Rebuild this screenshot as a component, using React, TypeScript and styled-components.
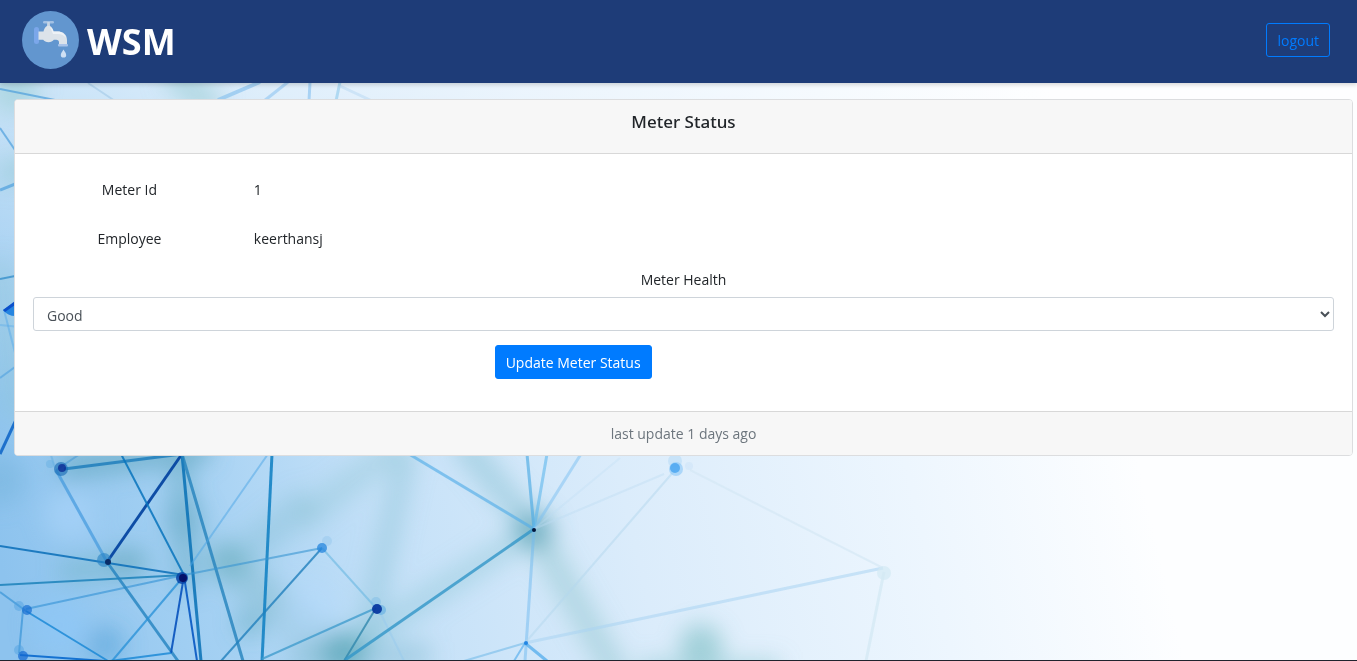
import React from "react";
import styled, { createGlobalStyle } from "styled-components";

const GlobalStyle = createGlobalStyle`
  *, *::before, *::after { box-sizing: border-box; }
  body {
    margin: 0;
    background: #fff;
    color: #212529;
    font-family: "Segoe UI", "Open Sans", "Noto Sans", sans-serif;
    font-size: 14px;
    line-height: 20px;
  }
`;

const Page = styled.div`
  display: flex;
  flex-direction: column;
  min-height: 100vh;
  border-bottom: 1px solid #20232e;
`;

const Backdrop = styled.svg`
  position: fixed;
  inset: 0;
  z-index: -1;
  width: 100%;
  height: 100%;
`;

const Navbar = styled.header`
  display: flex;
  align-items: center;
  justify-content: space-between;
  height: 83px;
  padding: 0 27px 3px 22px;
  background: #1e3c78;
  box-shadow: 0 2px 4px rgba(0, 0, 0, 0.15);
`;

const Brand = styled.a`
  display: flex;
  align-items: center;
  gap: 8px;
  color: #fff;
  font-size: 36px;
  font-weight: 700;
  line-height: 54px;
  text-decoration: none;
`;

const BrandName = styled.span`
  padding-top: 4px;
`;

const Logo = styled.svg`
  width: 57px;
  height: 58px;
`;

const Button = styled.button<{ $outline?: boolean }>`
  height: 34px;
  padding: 2px 10px 0;
  border: 1px solid #007bff;
  border-radius: 3px;
  background: ${(p) => (p.$outline ? "transparent" : "#007bff")};
  color: ${(p) => (p.$outline ? "#007bff" : "#fff")};
  font: inherit;
  cursor: pointer;
`;

const Main = styled.main`
  padding: 16px 4px 16px 14px;
`;

const Card = styled.section`
  border: 1px solid #dcdddf;
  border-radius: 4px;
  background: #fff;
  overflow: hidden;
`;

const CardHeader = styled.header`
  padding: 10px 18px 19px;
  border-bottom: 1px solid #d8d8d8;
  background: #f7f7f7;
  text-align: center;
`;

const Title = styled.h1`
  margin: 0;
  font-family: "Segoe UI", "Noto Sans", sans-serif;
  font-size: 17px;
  font-weight: 500;
  line-height: 24px;
`;

const CardBody = styled.form`
  padding: 18px 18px 32px;
`;

const Field = styled.div`
  display: grid;
  grid-template-columns: 1fr 5fr;
  align-items: center;
  height: 35px;
  margin-bottom: 14px;
`;

const FieldLabel = styled.label`
  padding-right: 24px;
  text-align: center;
`;

const FieldValue = styled.output`
  padding-left: 4px;
`;

const SelectGroup = styled.div`
  display: flex;
  flex-direction: column;
  margin-bottom: 14px;
`;

const SelectLabel = styled.label`
  margin-bottom: 7px;
  text-align: center;
`;

const Select = styled.select`
  width: 100%;
  height: 34px;
  padding: 2px 9px 0;
  border: 1px solid #ced4da;
  border-radius: 3px;
  background: #fff;
  color: #495057;
  font: inherit;
`;

const Actions = styled.div`
  display: grid;
  grid-template-columns: 1fr 1fr 1fr;
`;

const ActionSlot = styled.div`
  grid-column: 2;
  padding-left: 28px;
`;

const CardFooter = styled.footer`
  padding: 12px 18px 11px;
  border-top: 1px solid #d8d8d8;
  background: #f7f7f7;
  color: #6c757d;
  text-align: center;
`;

type Line = [number, number, number, number, string, number, number];

/* x1, y1, x2, y2, colour, width, opacity */
const lines: Line[] = [
  [0, 89, 60, 101, "#4d9fdc", 2, 0.7],
  [88, 83, 115, 101, "#a9cdea", 2, 0.7],
  [218, 100, 260, 82, "#8cc3ee", 4, 0.7],
  [264, 101, 288, 82, "#9bcbf2", 3, 0.7],
  [310, 82, 309, 101, "#9bcbf2", 3, 0.8],
  [340, 82, 336, 101, "#9bcfee", 3, 0.7],
  [340, 86, 370, 100, "#c3def5", 3, 0.7],
  [0, 128, 34, 178, "#4fa0dd", 2, 0.7],
  [0, 190, 30, 178, "#4fa0dd", 3, 0.7],
  [0, 279, 30, 273, "#3890cb", 2, 0.8],
  [4, 310, 30, 411, "#5aaae8", 2, 0.5],
  [0, 325, 30, 328, "#5aaae8", 2, 0.4],
  [0, 378, 30, 356, "#4fa0e0", 2, 0.6],
  [0, 454, 30, 390, "#1268c8", 3, 0.9],
  [50, 452, 55, 468, "#5aa9dc", 2, 0.4],
  [56, 470, 80, 454, "#4d9bd5", 2, 0.6],
  [64, 469, 182, 454, "#197bbb", 3, 0.8],
  [56, 470, 107, 562, "#3d96dc", 3, 0.65],
  [107, 562, 182, 454, "#0746a2", 3, 0.95],
  [121, 454, 184, 575, "#0874bd", 2, 0.85],
  [182, 454, 201, 661, "#0870b5", 3, 0.85],
  [182, 454, 243, 661, "#2583bd", 3, 0.8],
  [272, 454, 262, 661, "#1683c5", 3, 0.9],
  [268, 454, 190, 566, "#4da5e6", 2, 0.5],
  [0, 546, 184, 575, "#1173bb", 2, 0.9],
  [0, 585, 184, 575, "#2386bd", 2, 0.9],
  [26, 609, 184, 575, "#3995d7", 2, 0.65],
  [184, 575, 322, 548, "#3795d2", 2, 0.6],
  [107, 562, 178, 661, "#2383c0", 3, 0.8],
  [184, 576, 112, 661, "#258fd7", 2, 0.75],
  [184, 576, 171, 653, "#0752bd", 2, 0.9],
  [184, 576, 197, 661, "#0758c3", 2, 0.9],
  [0, 592, 26, 611, "#3995d7", 2, 0.7],
  [23, 610, 19, 653, "#3995d7", 2, 0.7],
  [26, 611, 108, 661, "#1686d5", 2, 0.8],
  [20, 655, 105, 661, "#0869ce", 2, 0.9],
  [110, 661, 171, 653, "#1686d5", 2, 0.8],
  [322, 548, 221, 661, "#2280bd", 2, 0.8],
  [322, 548, 376, 608, "#75bce4", 2, 0.7],
  [376, 608, 262, 659, "#429dce", 2, 0.8],
  [376, 608, 344, 661, "#3188ad", 2, 0.8],
  [378, 608, 404, 661, "#9bcced", 2, 0.6],
  [345, 660, 534, 529, "#3396c8", 3, 0.8],
  [409, 454, 534, 529, "#55aee8", 3, 0.65],
  [527, 454, 534, 529, "#4eabe4", 3, 0.65],
  [547, 454, 534, 529, "#5fb7ed", 3, 0.6],
  [581, 454, 534, 529, "#7cc0f2", 3, 0.5],
  [620, 458, 534, 529, "#bddcf3", 2, 0.3],
  [664, 474, 534, 529, "#bddcf3", 2, 0.4],
  [534, 529, 525, 661, "#71baf0", 3, 0.5],
  [525, 643, 675, 470, "#b4d7ee", 2, 0.5],
  [525, 643, 883, 568, "#a9d4f2", 3, 0.55],
  [464, 661, 525, 643, "#83c2ec", 2, 0.7],
  [525, 643, 547, 661, "#4ba9ec", 3, 0.7],
  [525, 643, 514, 661, "#4ba9ec", 2, 0.6],
  [690, 470, 883, 568, "#d3e7f4", 2, 0.6],
  [884, 572, 866, 661, "#cfe7f2", 3, 0.6],
];

/* blurred links that sit behind the sharp ones */
const hazes: Line[] = [
  [0, 175, 70, 160, "#8ec5cd", 24, 0.5],
  [0, 260, 15, 420, "#8ec5d5", 26, 0.4],
  [170, 70, 215, 110, "#9cced6", 30, 0.6],
  [300, 520, 400, 445, "#8ec5d5", 26, 0.4],
  [60, 468, 210, 448, "#5fa6bc", 26, 0.6],
  [407, 450, 365, 640, "#87c2d2", 22, 0.45],
  [460, 440, 534, 530, "#87c2d2", 26, 0.5],
  [534, 530, 620, 680, "#87c2c8", 26, 0.45],
  [534, 530, 345, 650, "#87c2d2", 24, 0.4],
  [230, 565, 310, 500, "#78b5c8", 32, 0.3],
  [60, 572, 150, 562, "#6caebc", 26, 0.4],
  [210, 550, 345, 660, "#78b5c4", 36, 0.4],
  [180, 460, 188, 590, "#5fa6bc", 24, 0.45],
  [290, 660, 430, 655, "#78b5c8", 26, 0.4],
  [640, 672, 780, 672, "#8ec8cf", 26, 0.5],
];

/* x, y, radius, colour, opacity */
const nodes: [number, number, number, string, number][] = [
  [50, 464, 4, "#69b1e4", 0.5],
  [61, 469, 7, "#1468b4", 0.6],
  [62, 468, 4, "#07218f", 0.7],
  [104, 560, 7, "#2682c4", 0.6],
  [108, 562, 3, "#07255e", 0.9],
  [182, 578, 6, "#0642a5", 0.85],
  [183, 578, 4, "#030b63", 0.9],
  [19, 606, 5, "#4d9fe0", 0.45],
  [27, 610, 5, "#176ed2", 0.7],
  [19, 650, 5, "#4d9fe0", 0.45],
  [23, 656, 5, "#1268d1", 0.7],
  [327, 541, 5, "#8fc2ec", 0.4],
  [322, 548, 5, "#2586dd", 0.75],
  [376, 602, 5, "#80bde7", 0.5],
  [381, 610, 5, "#61aee3", 0.6],
  [377, 609, 5, "#0839a0", 0.95],
  [534, 530, 2, "#02173d", 1],
  [526, 643, 2, "#1b80e2", 0.9],
  [675, 461, 7, "#b9dcf7", 0.6],
  [676, 469, 7, "#8fc9f8", 0.65],
  [675, 468, 5, "#47a4f0", 0.8],
  [689, 466, 4, "#cfe5f8", 0.6],
  [884, 573, 7, "#d3e9f3", 0.7],
];

const puffs: [number, number, number, string, number][] = [
  [15, 90, 24, "#9cced6", 0.6],
  [534, 530, 20, "#3b91a3", 0.45],
  [701, 646, 22, "#69b5ba", 0.5],
  [345, 653, 22, "#439cab", 0.5],
  [228, 562, 18, "#4f9fae", 0.3],
  [250, 623, 15, "#4f9fae", 0.4],
  [125, 562, 16, "#5099ad", 0.3],
  [185, 520, 22, "#5ba3be", 0.3],
  [105, 645, 20, "#3c96cf", 0.4],
  [0, 480, 26, "#6fb0d8", 0.4],
  [70, 515, 26, "#a6d2f8", 0.7],
  [60, 625, 28, "#8ec8f8", 0.6],
  [310, 610, 28, "#b6dafb", 0.6],
];

const NetworkBackdrop = () => (
  <Backdrop viewBox="0 0 1357 661" preserveAspectRatio="xMinYMin slice" aria-hidden="true">
    <defs>
      <linearGradient id="sky" gradientUnits="userSpaceOnUse" x1="0" y1="560" x2="1100" y2="300">
        <stop offset="0" stopColor="#8dc3ee" />
        <stop offset="0.18" stopColor="#a5d1f3" />
        <stop offset="0.34" stopColor="#c5e1f8" />
        <stop offset="0.55" stopColor="#dbecfb" />
        <stop offset="0.8" stopColor="#edf6fe" />
        <stop offset="1" stopColor="#fdfeff" />
      </linearGradient>
      <linearGradient id="lift" x1="0" y1="0" x2="0" y2="1">
        <stop offset="0.1" stopColor="#fff" stopOpacity="0.5" />
        <stop offset="0.6" stopColor="#fff" stopOpacity="0" />
      </linearGradient>
      <filter id="soft" filterUnits="userSpaceOnUse" x="-60" y="0" width="1000" height="760">
        <feGaussianBlur stdDeviation="11" />
      </filter>
    </defs>
    <rect width="1357" height="661" fill="url(#sky)" />
    <rect width="1357" height="661" fill="url(#lift)" />
    <g filter="url(#soft)">
      {hazes.map(([x1, y1, x2, y2, c, w, o], i) => (
        <line key={i} x1={x1} y1={y1} x2={x2} y2={y2} stroke={c} strokeWidth={w} opacity={o} />
      ))}
      {puffs.map(([x, y, r, c, o], i) => (
        <circle key={i} cx={x} cy={y} r={r} fill={c} opacity={o} />
      ))}
    </g>
    {lines.map(([x1, y1, x2, y2, c, w, o], i) => (
      <line key={i} x1={x1} y1={y1} x2={x2} y2={y2} stroke={c} strokeWidth={w} opacity={o} />
    ))}
    {nodes.map(([x, y, r, c, o], i) => (
      <circle key={i} cx={x} cy={y} r={r} fill={c} opacity={o} />
    ))}
    <path d="M3 310 L15 302 V316 Q8 316 3 310Z" fill="#2585e0" />
    <path d="M3 310 L15 301 V305 L5 312Z" fill="#0a4fcb" />
  </Backdrop>
);

const TapLogo = () => (
  <Logo viewBox="0 0 57 58" aria-hidden="true">
    <ellipse cx="28.5" cy="29" rx="28.5" ry="29" fill="#6296cf" />
    <rect x="12" y="16" width="5" height="17" rx="2.5" fill="#7ba7ea" />
    <rect x="21" y="10" width="11" height="2.4" rx="1.2" fill="#a3c1e4" />
    <path d="M25.3 11h2.4l.5 6h-3.4z" fill="#c8d6e5" />
    <path
      d="M16.500 20.500h5c1-3.500 2-5.500 5-5.500s4 2 5 5.500H36c5.500 0 9 3.500 9 8.500V34H37v-2.500c0-1.800-1-2.800-2.800-2.800h-2.400c-1 1.500-3 2.500-5.300 2.500s-4.300-1-5.300-2.500h-4.700z"
      fill="#dce3ea"
    />
    <path d="M28 16q3 1 3.500 4.500H36c4 0 7 2.500 8 6.500Q41 23 36 23h-5z" fill="#eef2f6" />
    <rect x="36" y="33" width="10" height="2.500" rx="1" fill="#a8c3ea" />
    <path d="M41.500 38.500c1.500 2.500 2.700 4 2.700 5.400a2.700 2.700 0 0 1-5.400 0c0-1.400 1.200-2.900 2.700-5.400z" fill="#cfe0f4" />
  </Logo>
);

export default function App() {
  return (
    <Page>
      <GlobalStyle />
      <NetworkBackdrop />
      <Navbar>
        <Brand href="#">
          <TapLogo />
          <BrandName>WSM</BrandName>
        </Brand>
        <Button type="button" $outline>
          logout
        </Button>
      </Navbar>
      <Main>
        <Card>
          <CardHeader>
            <Title>Meter Status</Title>
          </CardHeader>
          <CardBody onSubmit={(e) => e.preventDefault()}>
            <Field>
              <FieldLabel htmlFor="meter-id">Meter Id</FieldLabel>
              <FieldValue id="meter-id">1</FieldValue>
            </Field>
            <Field>
              <FieldLabel htmlFor="employee">Employee</FieldLabel>
              <FieldValue id="employee">keerthansj</FieldValue>
            </Field>
            <SelectGroup>
              <SelectLabel htmlFor="health">Meter Health</SelectLabel>
              <Select id="health" defaultValue="Good">
                <option>Good</option>
                <option>Bad</option>
              </Select>
            </SelectGroup>
            <Actions>
              <ActionSlot>
                <Button type="submit">Update Meter Status</Button>
              </ActionSlot>
            </Actions>
          </CardBody>
          <CardFooter>last update 1 days ago</CardFooter>
        </Card>
      </Main>
    </Page>
  );
}
